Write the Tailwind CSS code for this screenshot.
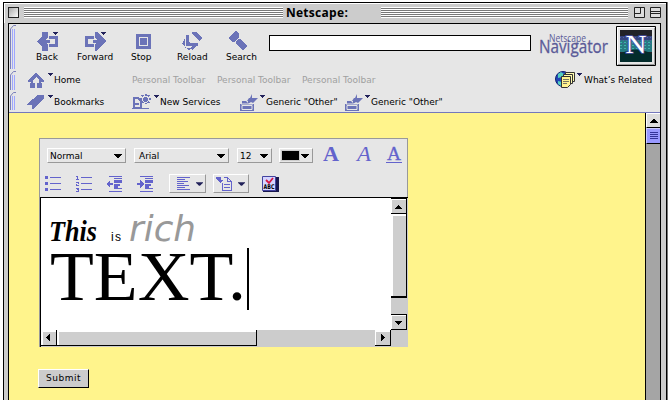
<!DOCTYPE html>
<html lang="en">
<head>
<meta charset="utf-8">
<title>Netscape:</title>
<script src="https://cdn.jsdelivr.net/npm/@tailwindcss/browser@4"></script>
</head>
<body class="w-[668px] h-[400px] overflow-hidden bg-white pl-[3px] pt-[2px] font-['DejaVu_Sans',sans-serif] text-[9px] leading-[12px] text-black">
<svg class="hidden">
  <defs>
    <pattern id="check" width="2" height="2" patternUnits="userSpaceOnUse"><rect width="2" height="2" fill="#fff"/><path d="M0 0h1v1H0zM1 1h1v1H1z" fill="#c4c4c4"/></pattern>
    <symbol id="tri" viewBox="0 0 5 3"><path d="M0 0h5v1H4v1H3v1H2V2H1V1H0z" fill="#22225a"/></symbol>
    <symbol id="drop" viewBox="0 0 8 4"><path d="M0 0h8v1H7v1H6v1H5v1H3V3H2V2H1V1H0z"/></symbol>
    <symbol id="other" viewBox="0 0 18 17"><g fill="#6b73b8"><path d="M12 0v4h6l-5 5-2-1-3 2V7H7l2-3h1z"/><path d="M2 7h4l2 2v1h6v7H0v-7h2z"/></g><path d="M1 10h12M2 11.500v4h10v-4z" stroke="#e6e6e6" stroke-width="1" fill="none"/></symbol>
  </defs>
</svg>
<div class="w-[664px] h-[398px] border-t border-l border-black border-r bg-[#cccccc] shadow-[1px_0_#777] flex flex-col">
  <!-- title bar -->
  <header class="h-[20px] border-t border-l border-white flex items-start pl-[3px] pt-[2px] shrink-0">
    <div class="mt-[1px] w-[11px] h-[11px] border border-[#222] bg-linear-to-br from-[#aaa] to-[#fff]"></div>
    <div class="ml-[5px] mt-[1px] w-[259px] h-[11px] bg-[repeating-linear-gradient(#fff_0_1px,#777_1px_2px)]"></div>
    <div class="w-[98px] h-[14px] text-center font-['Open_Sans',sans-serif] font-bold text-[12px] leading-[13px] tracking-[.3px] pr-[30px] whitespace-nowrap">Netscape:</div>
    <div class="mt-[1px] w-[247px] h-[11px] bg-[repeating-linear-gradient(#fff_0_1px,#777_1px_2px)]"></div>
    <svg class="ml-[6px] mt-[1px]" width="11" height="11"><path d="M.5.500h10v10H.5z" fill="#ddd" stroke="#222"/><path d="M6.500 1v5.500H1" fill="none" stroke="#222"/></svg>
    <svg class="ml-[5px] mt-[1px]" width="11" height="11"><path d="M.5.500h10v10H.5z" fill="#ddd" stroke="#222"/><path d="M1 4.500h9M1 6.500h9" stroke="#222"/></svg>
  </header>

  <div class="ml-[4px] w-[653px] flex-1 border-t border-l border-r border-black bg-[#e6e6e6] flex flex-col">
    <!-- navigation toolbar -->
    <div class="h-[46px] flex items-start shrink-0">
      <svg class="ml-[1px] mt-[1px]" width="6" height="44" fill="none"><path d="M.5 44V4L3.500.500H6" stroke="#7a80bb"/><path d="M2.500 44V4M4.500 44V4" stroke="#9ea6ff"/></svg>
      <div class="ml-[20px] w-[22px] pt-[8px]">
        <svg class="ml-[1px]" width="22" height="20" fill="#6b73b8" shape-rendering="crispEdges"><path d="M0 9 9 0h2v5L8 9l3 4v6H9zM5 4V0h5L5 5zM5 14l5 5H5z"/><path d="M12 4h9v11h-9v-3h6V7h-6zM8 8h5v3H8z"/><path d="M16 0h5v1h-1v1h-1v1h-1V2h-1V1h-1z" fill="#22225a"/></svg>
        <div class="mt-[-1px]">Back</div>
      </div>
      <div class="ml-[19px] w-[40px] pt-[8px]">
        <svg class="ml-[8px]" width="22" height="20" fill="#6b73b8" shape-rendering="crispEdges"><path d="M21 9 12 0h-2v5l3 4-3 4v6h2z"/><path d="M9 4H0v11h9v-3H3V7h6zM8 8h5v3H8z"/><path d="M16 0h5v1h-1v1h-1v1h-1V2h-1V1h-1z" fill="#22225a"/></svg>
        <div class="mt-[-1px]">Forward</div>
      </div>
      <div class="ml-[14px] w-[22px] pt-[8px]">
        <svg class="ml-[5px]" width="15" height="20" fill="none" shape-rendering="crispEdges"><path d="M0 2h15v15H0z" fill="#6b73b8"/><path d="M3.500 5.500h8v8h-8z" stroke="#e6e6e6"/></svg>
        <div class="mt-[-1px]">Stop</div>
      </div>
      <div class="ml-[24px] w-[30px] pt-[8px]">
        <svg class="ml-[5px]" width="21" height="20" fill="#6b73b8" shape-rendering="crispEdges"><path d="M10 0h4l6 6-3 3-7-7zM4 3h3v7l1 1h8v3H4z"/><path d="M3 6v10h6l-2 3L0 12zM12 13h3l-5 5-2-2z"/></svg>
        <div class="mt-[-1px]">Reload</div>
      </div>
      <div class="ml-[19px] w-[32px] pt-[7px]">
        <svg class="ml-[2px]" width="20" height="20" fill="#6b73b8" shape-rendering="crispEdges"><path d="M0 7 8 0l3 3v3L6 11H4zM10 8h3l6 7-3 4h-2l-6-6V10z"/></svg>
        <div>Search</div>
      </div>
      <div class="ml-[11px] mt-[11px] w-[262px] h-[16px] border border-black bg-white"></div>
      <svg class="ml-[8px] mt-[6px] font-['Open_Sans',sans-serif]" width="70" height="32" fill="#5a5a98"><text x="10" y="12" font-size="11" textLength="37" lengthAdjust="spacingAndGlyphs">Netscape</text><text x="0" y="22.500" font-size="17.500" stroke="#5a5a98" stroke-width=".3" textLength="69" lengthAdjust="spacingAndGlyphs">Navigator</text></svg>
      <svg class="ml-[7px] mt-[2px]" width="40" height="40"><path d="M.5.500h39v39H.5z" fill="#e6e6e6" stroke="#000"/><path d="M1.500 38V1.500H38" stroke="#fff" fill="none"/><path d="M38.500 2v36.500H2" stroke="#999" fill="none"/><path d="M4 4h32v32H4z" fill="#222228"/><path d="M4 10h32v7H4z" fill="#34427c"/><path d="M4 14h32v12H4z" fill="#267c82"/><path d="M4 11.500h32M4 14.500h32M4 17.500h32" stroke="#5060a0" stroke-dasharray="1 2"/><path d="M4 16.500h32M4 19.500h32M4 22.500h32" stroke="#40b0ac" stroke-dasharray="2 2"/><path d="M4 28q16-9 32 0v8H4z" fill="#042c2c"/><text x="9.500" y="27" font-size="25" textLength="21" lengthAdjust="spacingAndGlyphs" font-family="Liberation Serif,serif" fill="#fff" stroke="#4a50a8" stroke-width="1.500" paint-order="stroke">N</text></svg>
    </div>
    <!-- personal toolbar -->
    <div class="h-[21px] flex items-start shrink-0">
      <svg class="ml-[1px] mt-[1px]" width="6" height="19" fill="none"><path d="M.5 19V4L3.500.500H6" stroke="#7a80bb"/><path d="M2.500 19V4M4.500 19V4" stroke="#9ea6ff"/></svg>
      <svg class="ml-[12px] mt-[3px]" width="17" height="15" shape-rendering="crispEdges" fill="#6b73b8"><path d="M8 0 16 7v2h-3v1h-2V7L8 4 5 7v3H3V9H0V7zM2 10h5v5H2zM9 10h5v5H9z"/></svg>
      <svg class="ml-[3px] mt-[3px]" width="5" height="3"><use href="#tri"/></svg>
      <span class="ml-[1px] mt-[4px] w-[78px]">Home</span>
      <div class="mt-[4px] flex gap-[6px] text-[#a0a0a0]"><span class="w-[79px] whitespace-nowrap">Personal Toolbar</span><span class="w-[79px] whitespace-nowrap">Personal Toolbar</span><span class="w-[79px] whitespace-nowrap">Personal Toolbar</span></div>
      <svg class="ml-[174px] mt-[1px]" width="20" height="17" fill="none"><circle cx="8" cy="8" r="7.500" fill="#2345b5" stroke="#102070"/><path d="M3 3l3-2 3 2-2 3-4 1zM3 10l4 1-1 4-3-2z" fill="#54d0c0"/><path d="M10.500 1.500h9v9h-9z" fill="#fffbb0" stroke="#333"/><path d="M8.500 3.500h9v9h-9z" fill="#fffbb0" stroke="#333"/><path d="M6.500 5.500h9v8l-3 3h-6z" fill="#fff38f" stroke="#333"/><path d="M8 8.500h6M8 10.500h6M8 12.500h4" stroke="#776"/></svg>
      <svg class="ml-[2px] mt-[3px]" width="5" height="3"><use href="#tri"/></svg>
      <span class="ml-[2px] mt-[4px] whitespace-nowrap">What’s Related</span>
    </div>
    <!-- bookmarks toolbar -->
    <div class="h-[22px] flex items-start border-b border-[#7478bc] shrink-0">
      <svg class="ml-[1px] mt-[1px]" width="6" height="18" fill="none"><path d="M.5 18V4L3.500.500H6" stroke="#7a80bb"/><path d="M2.500 18V4M4.500 18V4" stroke="#9ea6ff"/></svg>
      <svg class="ml-[11px] mt-[4px]" width="18" height="15" shape-rendering="crispEdges" fill="#6b73b8"><path d="M11 0h6v4L6 14H5v-4H0V9z"/></svg>
      <svg class="ml-[3px] mt-[4px]" width="5" height="3"><use href="#tri"/></svg>
      <span class="ml-[1px] mt-[5px] w-[78px]">Bookmarks</span>
      <svg class="mt-[3px]" width="20" height="16" shape-rendering="crispEdges"><path d="M1.500 3.500h4l3 3v7h-7z" fill="none" stroke="#6b73b8" stroke-width="2"/><path d="M3 9h4v2H3zM0 14h17v1H0z" fill="#6b73b8"/><path d="M8 5h11M13.500 0v10M10 1l7 8M17 1l-7 8" stroke="#6b73b8" stroke-width="2" stroke-dasharray="2 1"/><path d="M12 3h3v3h-3z" fill="#6b73b8"/></svg>
      <svg class="ml-[2px] mt-[4px]" width="5" height="3"><use href="#tri"/></svg>
      <span class="ml-[1px] mt-[5px] w-[80px] whitespace-nowrap">New Services</span>
      <svg class="mt-[3px]" width="18" height="17"><use href="#other"/></svg>
      <svg class="ml-[2px] mt-[4px]" width="5" height="3"><use href="#tri"/></svg>
      <span class="ml-[1px] mt-[5px] w-[79px] whitespace-nowrap">Generic "Other"</span>
      <svg class="mt-[3px]" width="18" height="17"><use href="#other"/></svg>
      <svg class="ml-[2px] mt-[4px]" width="5" height="3"><use href="#tri"/></svg>
      <span class="ml-[1px] mt-[5px] whitespace-nowrap">Generic "Other"</span>
    </div>

    <!-- page -->
    <div class="flex flex-1">
      <main class="flex-1 bg-[#fff48c] pl-[30px] pt-[25px]">
        <div class="w-[369px] h-[209px] border-t border-l border-[#999] bg-[#e6e6e6] flex flex-col">
          <div class="h-[58px] border-r border-[#999] pl-[5px]">
            <div class="flex items-start pt-[9px] pl-[2px] h-[35px]">
              <div class="w-[79px] h-[15px] border border-t-white border-l-white border-r-[#999] border-b-[#999] flex items-center justify-between pl-[2px] pr-[3px]"><span>Normal</span><svg width="8" height="4"><use href="#drop"/></svg></div>
              <div class="ml-[8px] w-[95px] h-[15px] border border-t-white border-l-white border-r-[#999] border-b-[#999] flex items-center justify-between pl-[4px] pr-[3px]"><span>Arial</span><svg width="8" height="4"><use href="#drop"/></svg></div>
              <div class="ml-[8px] w-[35px] h-[15px] border border-t-white border-l-white border-r-[#999] border-b-[#999] flex items-center justify-between pl-[2px] pr-[3px]"><span>12</span><svg width="8" height="4"><use href="#drop"/></svg></div>
              <div class="ml-[7px] w-[34px] h-[15px] border border-t-white border-l-white border-r-[#999] border-b-[#999] flex items-center justify-between pl-[1px] pr-[3px]"><div class="w-[19px] h-[11px] border border-[#ccc] bg-black"></div><svg width="8" height="4"><use href="#drop"/></svg></div>
              <svg class="ml-[10px] mt-[-2px] font-['Liberation_Serif',serif]" width="84" height="20" fill="#6363cc" font-size="20"><text x="0" y="15" font-weight="bold" textLength="16" lengthAdjust="spacingAndGlyphs">A</text><text x="34" y="15" font-style="italic" textLength="14" lengthAdjust="spacingAndGlyphs">A</text><text x="64" y="14" font-size="19" textLength="14" lengthAdjust="spacingAndGlyphs" stroke="#6363cc" stroke-width=".3">A</text><path d="M63 16h16v1H63z"/></svg>
            </div>
            <div class="flex items-start h-[22px]">
              <svg width="17" height="16" class="mt-[2px]" fill="#6363cc" shape-rendering="crispEdges"><path d="M0 0h3v3H0zM0 6h3v3H0zM0 12h3v3H0zM5 1h11v1H5zM5 7h11v1H5zM5 13h11v1H5z"/></svg>
              <svg width="17" height="16" class="ml-[14px] mt-[2px]" fill="#6363cc" shape-rendering="crispEdges"><path d="M1 0h1v3h1v1H0V3h1V1H0V0zM0 6h3v2H1v1h2v1H0V8h2V7H0zM0 12h3v4H0v-1h2v-1H1v-1h1H0zM5 1h11v1H5zM5 7h11v1H5zM5 13h11v1H5z"/></svg>
              <svg width="17" height="16" class="ml-[13px] mt-[2px]" fill="#6363cc" shape-rendering="crispEdges"><path d="M3 0h13v1H3zM8 2h8v1H8zM8 4h8v3H8zM8 9h4v3H8zM8 13h8v-1H8zM3 15h13v1H3zM0 8l4-4v3h3v2H4v3zM8 8h6v2H8z"/></svg>
              <svg width="17" height="16" class="ml-[14px] mt-[2px]" fill="#6363cc" shape-rendering="crispEdges"><path d="M3 0h13v1H3zM8 2h8v1H8zM8 4h8v3H8zM8 9h4v3H8zM8 13h8v-1H8zM3 15h13v1H3zM7 8 3 4v3H0v2h3v3zM8 8h6v2H8z"/></svg>
              <div class="ml-[15px] w-[37px] h-[19px] border border-t-white border-l-white border-r-[#999] border-b-[#999] flex items-center pl-[7px] gap-[6px]"><svg width="13" height="14" fill="#6363cc" shape-rendering="crispEdges"><path d="M0 0h13v1H0zM0 2h8v1H0zM0 4h11v1H0zM0 6h7v1H0zM0 8h12v1H0zM0 10h8v1H0zM0 12h13v1H0z"/></svg><svg width="7" height="4" fill="#22225a"><use href="#drop"/></svg></div>
              <div class="ml-[7px] w-[36px] h-[19px] border border-t-white border-l-white border-r-[#999] border-b-[#999] flex items-center pl-[2px] gap-[5px]"><svg width="17" height="16" shape-rendering="crispEdges"><path d="M0 1h5v3h3L4.500 7 1 4V3H0z" fill="#6363cc"/><path d="M7.500 1.500h4l4 4v9h-9v-8M11.500 1v4h4" stroke="#6363cc" fill="none"/><path d="M8 8h6v1H8zM8 11h6v1H8z" fill="#6363cc"/></svg><svg width="7" height="4" fill="#22225a"><use href="#drop"/></svg></div>
              <svg class="ml-[13px] mt-[2px]" width="17" height="16"><path d="M1 1h16v15H1z" fill="#17174f"/><path d="M.5.500h13v14H.5z" fill="#d5d5ff" stroke="#4444a0"/><path d="M4 4l3 3 4-5" stroke="#d41543" stroke-width="1.800" fill="none"/><text x="1.500" y="12.500" font-size="6.500" font-weight="bold" textLength="11" lengthAdjust="spacingAndGlyphs" font-family="DejaVu Sans,sans-serif">ABC</text></svg>
            </div>
          </div>
          <div class="h-[150px] border-t border-l border-black bg-[#ccc]">
            <div class="flex h-[132px]">
              <svg class="bg-white" width="350" height="132"><text x="8" y="43" font-family="Liberation Serif,serif" font-style="italic" font-weight="bold" font-size="30" textLength="48" lengthAdjust="spacingAndGlyphs">This</text><text x="70" y="43" font-family="Liberation Sans,sans-serif" font-size="12" textLength="10">is</text><text x="88" y="43" font-family="DejaVu Sans,sans-serif" font-style="italic" font-size="36" fill="#999" textLength="67" lengthAdjust="spacingAndGlyphs">rich</text><text x="9" y="102" font-family="Liberation Serif,serif" font-size="70" textLength="196" lengthAdjust="spacingAndGlyphs">TEXT.</text><path d="M206 50h2v62h-2z"/></svg>
              <svg width="17" height="132" shape-rendering="crispEdges"><path d="M0 0h17v132H0z" fill="url(#check)"/><path d="M0 0h16v16H0zM0 16h16v84H0zM0 116h16v16H0z"/><path d="M0 1h15v14H0zM0 16h15v82H0zM0 117h15v14H0z" fill="#fff"/><path d="M1 2h14v13H1zM2 18h13v80H2zM1 118h14v13H1z" fill="#cecece"/><path d="M7 7h1v1h1v1h1v1h1v1H4v-1h1V9h1V8h1zM4 123h7v1h-1v1H9v1H8v1H7v-1H6v-1H5v-1H4z"/></svg>
            </div>
            <svg width="367" height="17" shape-rendering="crispEdges"><path d="M0 0h350v17H0z" fill="url(#check)"/><path d="M350 0h17v17h-17z" fill="#ccc"/><path d="M0 0h216v16H0zM334 0h16v16h-16z"/><path d="M0 0h15v15H0zM16 0h199v15H16zM334 0h15v15h-15z" fill="#fff"/><path d="M2 2h13v13H2zM18 2h197v13H18zM335 2h14v13h-14z" fill="#cecece"/><path d="M9 4v7H8v-1H7V9H6V8H5V7h1V6h1V5h1V4zM340 4v7h1v-1h1V9h1V8h1V7h-1V6h-1V5h-1V4z"/></svg>
          </div>
        </div>
        <button class="ml-[-1px] mt-[22px] block w-[51px] h-[19px] border border-t-white border-l-white border-r-black border-b-black bg-[#ccc] text-center leading-[17px] tracking-[.5px]">Submit</button>
      </main>
      <div class="w-[15px] border-l border-black bg-[#a5a5a5] flex flex-col">
        <div class="h-[15px] border-b border-black border-t-white border-t border-l border-l-white bg-[#ddd] flex items-center justify-center"><svg width="8" height="4" class="rotate-180"><use href="#drop"/></svg></div>
        <div class="h-[16px] border-b border-black border-t border-t-[#ccf] border-l border-l-[#ccf] bg-[#9999ff] flex items-center justify-center"><svg width="8" height="8"><path d="M0 .5h8M0 2.500h8M0 4.500h8M0 6.500h8" stroke="#333399"/></svg></div>
      </div>
    </div>
  </div>
</div>
</body>
</html>
